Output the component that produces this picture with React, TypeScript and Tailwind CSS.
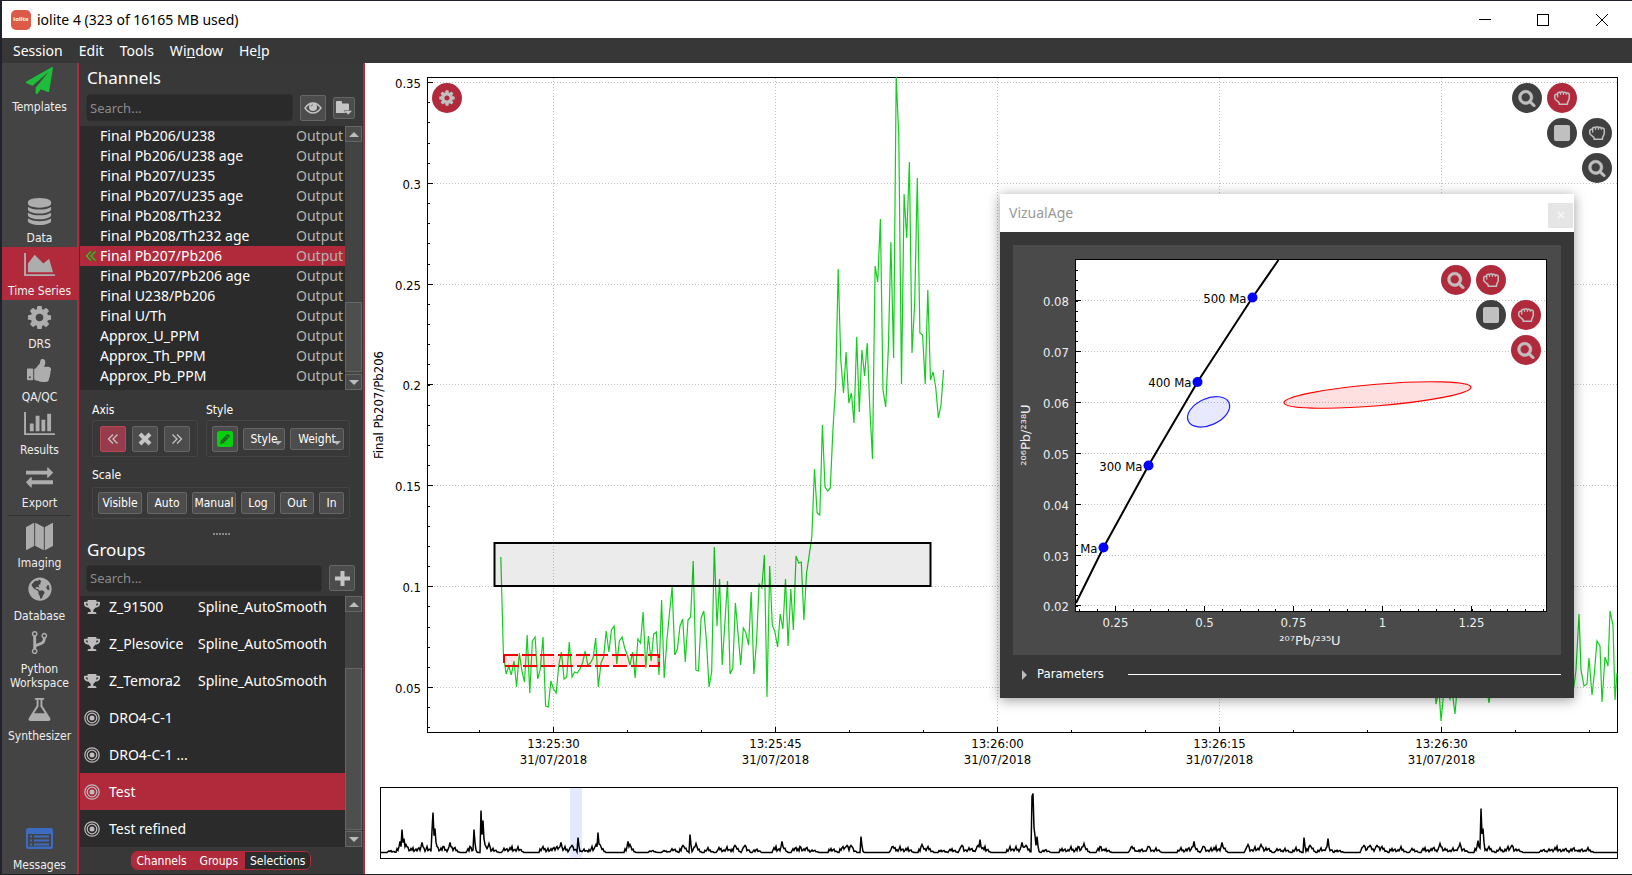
import React, { useState } from 'react';
import { FaGlobeAmericas, FaRegHandRock, FaTrophy } from 'react-icons/fa';

const COG =
  'M1152 896q0-106-75-181t-181-75-181 75-75 181 75 181 181 75 181-75 75-181zm512-109v222q0 12-8 23t-20 13l-185 28q-19 54-39 91 35 50 107 138 10 12 10 25t-9 23q-27 37-99 108t-94 71q-12 0-26-9l-138-108q-44 23-91 38-16 136-29 186-7 28-36 28h-222q-14 0-24.5-8.500t-11.500-21.500l-28-184q-49-16-90-37l-141 107q-10 9-25 9-14 0-25-11-126-114-165-168-7-10-7-23 0-12 8-23 15-21 51-66.500t54-70.500q-27-50-41-99l-183-27q-13-2-21-12.500t-8-23.500v-222q0-12 8-23t19-13l186-28q14-46 39-92-40-57-107-138-10-12-10-24 0-10 9-23 26-36 98.500-107.500t94.500-71.500q13 0 26 10l138 107q44-23 91-38 16-136 29-186 7-28 36-28h222q14 0 24.500 8.500t11.500 21.500l28 184q49 16 90 37l142-107q9-9 24-9 13 0 25 10 129 119 165 170 7 8 7 22 0 12-8 23-15 21-51 66.500t-54 70.500q26 50 41 98l183 28q13 2 21 12.500t8 23.500z';
const SEARCH =
  'M1216 832q0-185-131.500-316.500t-316.500-131.500-316.500 131.500-131.500 316.500 131.500 316.500 316.500 131.500 316.500-131.500 131.500-316.500zm512 832q0 52-38 90t-90 38q-54 0-90-38l-343-342q-179 124-399 124-143 0-273.500-55.500t-225-150-150-225-55.500-273.500 55.500-273.500 150-225 225-150 273.500-55.500 273.500 55.500 225 150 150 225 55.500 273.500q0 220-124 399l343 343q37 37 37 90z';
const PLANE =
  'M1764 11q33 24 27 64l-256 1536q-5 29-32 45-14 8-31 8-11 0-24-5l-453-185-242 295q-18 23-49 23-13 0-22-4-19-7-30.500-23.500t-11.500-36.500v-349l864-1059-1069 925-395-162q-37-14-40-55-2-40 32-59l1664-960q15-9 32-9 20 0 36 11z';
const DATABASE =
  'M896 768q237 0 443-43t325-127v170q0 69-103 128t-280 93.500-385 34.500-385-34.500-280-93.500-103-128v-170q119 84 325 127t443 43zm0 768q237 0 443-43t325-127v170q0 69-103 128t-280 93.500-385 34.500-385-34.500-280-93.500-103-128v-170q119 84 325 127t443 43zm0-384q237 0 443-43t325-127v170q0 69-103 128t-280 93.500-385 34.500-385-34.500-280-93.500-103-128v-170q119 84 325 127t443 43zm0-1152q208 0 385 34.500t280 93.500 103 128v128q0 69-103 128t-280 93.500-385 34.500-385-34.500-280-93.500-103-128v-128q0-69 103-128t280-93.500 385-34.500z';
const AREA =
  'M2048 1536v128h-2048v-1536h128v1408h1920zm-384-1024l256 896h-1664v-576l448-576 576 576z';
const BARS =
  'M640 896v512h-256v-512h256zm384-512v1024h-256v-1024h256zm1024 1152v128h-2048v-1536h128v1408h1920zm-640-896v768h-256v-768h256zm384-384v1152h-256v-1152h256z';
const THUMB =
  'M320 1344q0-26-19-45t-45-19q-27 0-45.500 19t-18.500 45q0 27 18.500 45.500t45.500 18.500q26 0 45-18.500t19-45.500zm160-512v640q0 26-19 45t-45 19h-288q-26 0-45-19t-19-45v-640q0-26 19-45t45-19h288q26 0 45 19t19 45zm1184 0q0 86-55 149 15 44 15 76 3 76-43 137 17 56 0 117-15 57-54 94 9 112-49 181-64 76-197 78h-129q-66 0-144-15.500t-121.500-29-120.500-39.500q-123-43-158-44-26-1-45-19.500t-19-44.500v-641q0-25 18-43.500t43-20.500q24-2 76-59t101-121q68-87 101-120 18-18 31-48t17.500-48.500 13.500-60.500q7-39 12.500-61t19.500-52 34-50q19-19 45-19 46 0 82.500 10.500t60 26 40 40.500 24 45 12 50 5 45 .5 39q0 38-9.500 76t-19 60-27.500 56q-3 6-10 18t-11 22-8 24h277q78 0 135 57t57 135z';
const EXCHANGE =
  'M1792 1184v192q0 13-9.500 22.500t-22.500 9.500h-1376v192q0 13-9.500 22.500t-22.500 9.500q-12 0-24-10l-319-320q-9-9-9-22 0-14 9-23l320-320q9-9 23-9 13 0 22.500 9.500t9.500 22.500v192h1376q13 0 22.500 9.500t9.500 22.500zm0-544q0 14-9 23l-320 320q-9 9-23 9-13 0-22.500-9.500t-9.500-22.500v-192h-1376q-13 0-22.500-9.500t-9.500-22.500v-192q0-13 9.500-22.500t22.500-9.500h1376v-192q0-14 9-23t23-9q12 0 24 10l319 319q9 9 9 23z';
const MAP =
  'M512 0q13 0 22.500 9.500t9.500 22.500v1472q0 20-17 28l-480 256q-7 4-15 4-13 0-22.500-9.500t-9.500-22.500v-1472q0-20 17-28l480-256q7-4 15-4zm1248 0q13 0 22.500 9.500t9.500 22.500v1472q0 20-17 28l-480 256q-7 4-15 4-13 0-22.500-9.500t-9.500-22.500v-1472q0-20 17-28l480-256q7-4 15-4zm-1120 0q8 0 14 3l512 256q18 10 18 29v1472q0 13-9.500 22.500t-22.500 9.500q-8 0-14-3l-512-256q-18-10-18-29v-1472q0-13 9.500-22.500t22.500-9.500z';
const FORK =
  'M672 1472q0-40-28-68t-68-28-68 28-28 68 28 68 68 28 68-28 28-68zm0-1152q0-40-28-68t-68-28-68 28-28 68 28 68 68 28 68-28 28-68zm640 128q0-40-28-68t-68-28-68 28-28 68 28 68 68 28 68-28 28-68zm96 0q0 52-26 96.500t-70 69.500q-2 287-226 414-68 38-203 81-128 40-169.500 71t-41.500 100v26q44 25 70 69.500t26 96.500q0 80-56 136t-136 56-136-56-56-136q0-52 26-96.500t70-69.500v-820q-44-25-70-69.500t-26-96.500q0-80 56-136t136-56 136 56 56 136q0 52-26 96.500t-70 69.500v497q54-26 154-57 55-17 87.500-29.500t70.500-31 59-39.500 40.500-51 28-69.500 8.500-91.500q-44-25-70-69.500t-26-96.500q0-80 56-136t136-56 136 56 56 136z';
const FLASK =
  'M1591 1448q56 89 21.500 152.500t-140.500 63.500h-1152q-106 0-140.500-63.500t21.500-152.500l503-793v-399h-64q-26 0-45-19t-19-45 19-45 45-19h512q26 0 45 19t19 45-19 45-45 19h-64v399zm-779-725l-272 429h712l-272-429-20-31v-436h-128v436z';

const Glyph = ({ d, className, wide }: { d: string; className: string; wide?: boolean }) => (
  <svg viewBox={wide ? '0 0 2048 1792' : '0 0 1792 1792'} className={className} fill="currentColor" aria-hidden="true">
    <path d={d} />
  </svg>
);

const SearchIcon = () => (
  <svg viewBox="0 0 1792 1792" className="h-[18px] w-[18px]" fill="currentColor" stroke="currentColor" strokeWidth="60" aria-hidden="true">
    <path d={SEARCH} />
  </svg>
);

const ListIcon = () => (
  <svg viewBox="0 0 27 21" className="h-[21px] w-[27px]" fill="#3b6cc0" aria-hidden="true">
    <path fillRule="evenodd" d="M2 0h23a2 2 0 0 1 2 2v17a2 2 0 0 1-2 2H2a2 2 0 0 1-2-2V2a2 2 0 0 1 2-2zM2 6v12.500h23V6z" />
    <path d="M4 7.500h2v2H4zM4 11.500h2v2H4zM4 15.500h2v2H4zM8 7.500h15v2H8zM8 11.500h15v2H8zM8 15.500h15v2H8z" />
  </svg>
);

const Bullseye = () => (
  <svg viewBox="0 0 16 16" className="h-4 w-4" fill="none" stroke="#bdbdbd" strokeWidth="1.200" aria-hidden="true">
    <circle cx="8" cy="8" r="7.200" />
    <circle cx="8" cy="8" r="4.800" />
    <circle cx="8" cy="8" r="2.500" fill="#bdbdbd" stroke="none" />
  </svg>
);

const Chevrons = ({ flip, color, className }: { flip?: boolean; color: string; className: string }) => (
  <svg viewBox="0 0 12 12" className={className} fill="none" stroke={color} strokeWidth="1.300" aria-hidden="true">
    <path d={flip ? 'M1.500 1.500L6 6 1.500 10.500M6 1.500L10.500 6 6 10.500' : 'M6 1.500L1.500 6 6 10.500M10.500 1.500L6 6l4.500 4.500'} />
  </svg>
);

interface NavEntry {
  label: string;
  icon: React.ReactNode;
}

const NAV_MAIN: NavEntry[] = [
  { label: 'Data', icon: <Glyph d={DATABASE} className="h-[27px] w-[27px]" /> },
  { label: 'Time Series', icon: <Glyph d={AREA} wide className="h-[27px] w-[31px]" /> },
  { label: 'DRS', icon: <Glyph d={COG} className="h-[27px] w-[27px]" /> },
  { label: 'QA/QC', icon: <Glyph d={THUMB} className="h-[27px] w-[27px]" /> },
  { label: 'Results', icon: <Glyph d={BARS} wide className="h-[27px] w-[31px]" /> },
  { label: 'Export', icon: <Glyph d={EXCHANGE} className="h-[27px] w-[27px]" /> },
];

const NAV_EXTRA: NavEntry[] = [
  { label: 'Imaging', icon: <Glyph d={MAP} className="h-[27px] w-[27px]" /> },
  { label: 'Database', icon: <FaGlobeAmericas size={24} /> },
  { label: 'Python Workspace', icon: <Glyph d={FORK} className="h-[27px] w-[27px]" /> },
  { label: 'Synthesizer', icon: <Glyph d={FLASK} className="h-[27px] w-[27px]" /> },
];

const CHANNELS = [
  'Final Pb206/U238',
  'Final Pb206/U238 age',
  'Final Pb207/U235',
  'Final Pb207/U235 age',
  'Final Pb208/Th232',
  'Final Pb208/Th232 age',
  'Final Pb207/Pb206',
  'Final Pb207/Pb206 age',
  'Final U238/Pb206',
  'Final U/Th',
  'Approx_U_PPM',
  'Approx_Th_PPM',
  'Approx_Pb_PPM',
];

const GROUPS = [
  { name: 'Z_91500', spline: 'Spline_AutoSmooth' },
  { name: 'Z_Plesovice', spline: 'Spline_AutoSmooth' },
  { name: 'Z_Temora2', spline: 'Spline_AutoSmooth' },
  { name: 'DRO4-C-1', spline: '' },
  { name: 'DRO4-C-1 ...', spline: '' },
  { name: 'Test', spline: '' },
  { name: 'Test refined', spline: '' },
];

const TRACE = [
  557, 654, 674, 666, 675, 661, 687, 653, 671, 682, 635, 693, 641, 637, 679, 669, 637, 706, 707, 681, 689, 693, 665,
  652, 679, 677, 642, 677, 672, 673, 669, 663, 651, 665, 663, 658, 638, 687, 663, 657, 631, 652, 630, 626, 664, 641,
  637, 648, 655, 665, 652, 678, 639, 643, 612, 668, 636, 661, 634, 632, 675, 600, 678, 640, 613, 587, 655, 649, 626,
  619, 662, 620, 617, 561, 670, 671, 618, 611, 640, 687, 672, 547, 626, 579, 665, 623, 581, 674, 668, 603, 633, 665,
  628, 633, 645, 592, 674, 642, 584, 588, 555, 697, 566, 625, 632, 647, 614, 629, 579, 646, 589, 630, 556, 563, 562,
  620, 573, 555, 537, 469, 513, 515, 425, 487, 491, 488, 430, 387, 269, 360, 393, 352, 403, 393, 423, 337, 412, 350,
  376, 343, 407, 459, 266, 282, 219, 390, 407, 350, 242, 358, 77, 137, 384, 194, 238, 162, 353, 303, 178, 333, 335,
  384, 290, 380, 372, 387, 418, 405, 370,
];
const TRACE_POINTS = TRACE.map((y, i) => `${(500.8 + i * 2.636).toFixed(1)},${y}`).join(' ');

const TRACE_TAIL =
  '1435,690 1436,704 1439,690 1441,721 1444,690 1447,690 1450,699 1452,690 1455,714 1457,690 1487,690 1489,703 1491,690 1560,690 1574,686 1576,670 1579,614 1581,670 1584,686 1587,684 1589,658 1592,695 1594,677 1597,641 1600,646 1602,702 1605,657 1608,666 1610,611 1613,625 1615,700 1617,673';

// x and height of every peak in the session overview
const PEAKS: [number, number][] = [
  [391, 2], [400, 11], [402, 23], [404, 14], [406, 8], [413, 5], [418, 5], [422, 10], [427, 6], [432, 22], [433, 40],
  [435, 24], [437, 6], [443, 6], [450, 10], [454, 5], [470, 6], [474, 23], [481, 42], [483, 32], [485, 8], [489, 9],
  [493, 4], [505, 5], [512, 6], [518, 5], [543, 6], [548, 4], [553, 5], [557, 6], [561, 10], [565, 5], [572, 7],
  [578, 15], [584, 3], [592, 6], [596, 8], [598, 20], [600, 8], [628, 11], [630, 8], [652, 2], [665, 2], [673, 4],
  [683, 7], [690, 18], [696, 9], [708, 4], [720, 5], [727, 5], [735, 7], [745, 7], [756, 4], [776, 6], [782, 11],
  [795, 5], [800, 6], [806, 5], [813, 3], [832, 5], [843, 6], [847, 7], [851, 7], [861, 16], [893, 6], [900, 6],
  [908, 5], [922, 8], [928, 6], [942, 3], [952, 4], [962, 7], [970, 5], [978, 7], [980, 13], [985, 6], [1010, 6],
  [1016, 5], [1022, 10], [1026, 7], [1032, 56], [1033, 59], [1035, 17], [1037, 16], [1045, 3], [1063, 5], [1071, 5],
  [1078, 6], [1084, 9], [1100, 6], [1106, 4], [1132, 6], [1141, 4], [1149, 6], [1156, 4], [1181, 4], [1188, 5],
  [1194, 11], [1204, 6], [1211, 4], [1216, 6], [1222, 10], [1248, 8], [1255, 5], [1261, 8], [1267, 5], [1278, 4],
  [1285, 4], [1296, 5], [1304, 15], [1310, 7], [1321, 4], [1328, 14], [1338, 3], [1364, 7], [1370, 7], [1377, 7],
  [1382, 6], [1393, 5], [1401, 5], [1413, 4], [1425, 5], [1433, 5], [1440, 9], [1446, 4], [1453, 4], [1460, 9],
  [1463, 4], [1478, 12], [1481, 44], [1483, 24], [1489, 6], [1500, 4], [1508, 6], [1512, 7], [1517, 4], [1543, 3],
  [1550, 4], [1557, 6], [1565, 4], [1573, 5], [1581, 4], [1588, 4],
];

const overviewHeight = (x: number) =>
  PEAKS.reduce((top, [px, h]) => {
    const d = x - px;
    if (h > 14) {
      if (d < -1 || d > 3) return top;
      return Math.max(top, h * (d <= 0 ? 1 + d : (1 - d / 4) ** 3));
    }
    if (d < -3 || d > 5) return top;
    return Math.max(top, d === 0 ? h : Math.min(h, 7) * (1 - Math.abs(d) / 6));
  }, 0);

const OVERVIEW_POINTS = Array.from({ length: 1237 }, (_, i) => {
  const x = 381 + i;
  const h = overviewHeight(x);
  const jitter = h > 5 ? 1 : 0.3 + ((i * 37) % 11) / 11;
  return `${x},${(852.5 - h * jitter).toFixed(1)}`;
}).join(' ');

const Y_TICKS: [string, number][] = [
  ['0.35', 82.5], ['0.3', 183.5], ['0.25', 284.5], ['0.2', 384.5], ['0.15', 485.5], ['0.1', 586.5], ['0.05', 687.5],
];
const X_TICKS: [string, number][] = [
  ['13:25:30', 553.5], ['13:25:45', 775.5], ['13:26:00', 997.5], ['13:26:15', 1219.5], ['13:26:30', 1441.5],
];
const range = (from: number, to: number, step: number) => {
  const out: number[] = [];
  for (let v = from; v <= to; v += step) out.push(v);
  return out;
};

const TimeSeriesChart = () => (
  <svg viewBox="365 63 1267 712" className="w-full min-h-0 flex-1 font-['DejaVu_Sans_Condensed','DejaVu_Sans',sans-serif] text-[13px]" role="img" aria-label="Final Pb207/Pb206 time series">
    <g stroke="#c0c0c0" strokeDasharray="1 2" shapeRendering="crispEdges">
      {Y_TICKS.map(([t, y]) => <line key={t} x1="428" x2="1617" y1={y} y2={y} />)}
      {X_TICKS.map(([t, x]) => <line key={t} x1={x} x2={x} y1="78" y2="732" />)}
    </g>
    <g stroke="#000" shapeRendering="crispEdges">
      <rect x="427.5" y="77.5" width="1190" height="655" fill="none" />
      {Y_TICKS.map(([t, y]) => <line key={t} x1="428" x2="433" y1={y} y2={y} />)}
      {range(82.5, 732, 20.17).map((y) => <line key={y} x1="428" x2="430" y1={y} y2={y} />)}
      {X_TICKS.map(([t, x]) => <line key={t} x1={x} x2={x} y1="727" y2="732" />)}
      {range(479.5, 1617, 74).map((x) => <line key={x} x1={x} x2={x} y1="730" y2="732" />)}
    </g>
    <g fill="none" stroke="#12cf1c" strokeWidth="1.200">
      <polyline points={TRACE_POINTS} />
      <polyline points={TRACE_TAIL} />
    </g>
    <rect x="494.5" y="543" width="436" height="43" fill="#000" fillOpacity="0.08" stroke="#000" strokeWidth="2" />
    <rect x="504" y="655" width="155" height="11" fill="#f00" fillOpacity="0.1" stroke="#f00000" strokeWidth="2" strokeDasharray="14 4" />
    <g fill="#000">
      {Y_TICKS.map(([t, y]) => <text key={t} x="421" y={y + 5} textAnchor="end">{t}</text>)}
      {X_TICKS.map(([t, x]) => (
        <text key={t} textAnchor="middle">
          <tspan x={x} y="748">{t}</tspan>
          <tspan x={x} y="764">31/07/2018</tspan>
        </text>
      ))}
      <text transform="translate(383 405) rotate(-90)" textAnchor="middle">Final Pb207/Pb206</text>
    </g>
  </svg>
);

const Overview = () => (
  <svg viewBox="365 775 1267 99" className="w-full shrink-0" role="img" aria-label="Session overview">
    <rect x="570" y="788" width="12" height="70" fill="#e4e9ff" />
    <polyline points={OVERVIEW_POINTS} fill="none" stroke="#000" strokeWidth="1.500" />
    <rect x="380.5" y="787.5" width="1237" height="71" fill="none" stroke="#000" shapeRendering="crispEdges" />
  </svg>
);

const AGE_Y: [string, number][] = [
  ['0.08', 300.5], ['0.07', 351.5], ['0.06', 402.5], ['0.05', 453.5], ['0.04', 504.5], ['0.03', 555.5], ['0.02', 605.5],
];
const AGE_X: [string, number][] = [
  ['0.25', 1115.5], ['0.5', 1204.5], ['0.75', 1293.5], ['1', 1382.5], ['1.25', 1471.5],
];
const AGE_MARKS: [string, number, number][] = [
  ['500 Ma', 1252.5, 297.5], ['400 Ma', 1197.5, 382], ['300 Ma', 1148.5, 465.5], ['Ma', 1103.5, 547.5],
];

const ConcordiaChart = () => (
  <svg viewBox="1013 245 548 410" className="block w-full font-['DejaVu_Sans_Condensed','DejaVu_Sans',sans-serif] text-[13px]" role="img" aria-label="Concordia diagram">
    <rect x="1075.5" y="259.5" width="471" height="352" fill="#fff" />
    <g stroke="#c0c0c0" strokeDasharray="1 2" shapeRendering="crispEdges">
      {AGE_Y.map(([t, y]) => <line key={t} x1="1076" x2="1546" y1={y} y2={y} />)}
    </g>
    <g stroke="#000" shapeRendering="crispEdges">
      <rect x="1075.5" y="259.5" width="471" height="352" fill="none" />
      {AGE_Y.map(([t, y]) => <line key={t} x1="1076" x2="1081" y1={y} y2={y} />)}
      {range(270.5, 611, 10.17).map((y) => <line key={y} x1="1076" x2="1078" y1={y} y2={y} />)}
      {AGE_X.map(([t, x]) => <line key={t} x1={x} x2={x} y1="606" y2="611" />)}
      {range(1079.5, 1546, 17.85).map((x) => <line key={x} x1={x} x2={x} y1="609" y2="611" />)}
    </g>
    <polyline points="1076,603 1103.5,547.5 1148.5,465.5 1197.500,382 1252.5,297.5 1278.5,260" fill="none" stroke="#000" strokeWidth="2" />
    <ellipse cx="1208.600" cy="411.800" rx="22.300" ry="13.300" transform="rotate(-24.400 1208.600 411.800)" fill="#00f" fillOpacity="0.09" stroke="#2020ff" strokeWidth="1.200" />
    <ellipse cx="1377.500" cy="395" rx="93.800" ry="10.800" transform="rotate(-4.700 1377.500 395)" fill="#f00" fillOpacity="0.12" stroke="#f00" strokeWidth="1.200" />
    {AGE_MARKS.map(([t, x, y]) => (
      <g key={t}>
        <circle cx={x} cy={y} r="5" fill="#00f" />
        <text x={x - 6} y={y + 5} textAnchor="end">{t}</text>
      </g>
    ))}
    <g fill="#eee">
      {AGE_Y.map(([t, y]) => <text key={t} x="1069" y={y + 5} textAnchor="end">{t}</text>)}
      {AGE_X.map(([t, x]) => <text key={t} x={x} y="627" textAnchor="middle">{t}</text>)}
      <g className="font-['DejaVu_Sans',sans-serif]">
        <text x="1310" y="645" textAnchor="middle">²⁰⁷Pb/²³⁵U</text>
        <text transform="translate(1030 435) rotate(-90)" textAnchor="middle">²⁰⁶Pb/²³⁸U</text>
      </g>
    </g>
  </svg>
);

const Round = ({ label, red, className, children }: { label: string; red?: boolean; className?: string; children: React.ReactNode }) => (
  <button
    type="button"
    aria-label={label}
    className={`flex h-[30px] w-[30px] items-center justify-center rounded-full text-[#c0c0c0] ${red ? 'bg-[#b02a3b]' : 'bg-[#404040]'} ${className ?? ''}`}
  >
    {children}
  </button>
);

// Zoom and pan buttons in the corner of a plot, one row per axis
const PlotTools = ({ red }: { red?: boolean }) => (
  <div className="grid grid-cols-3 gap-[5px]">
    <Round label="Zoom both axes" red={red}><SearchIcon /></Round>
    <Round label="Pan both axes" red><FaRegHandRock size={16} /></Round>
    <Round label="Select area" className="col-start-2"><span className="h-4 w-4 rounded-xs bg-[#c0c0c0]" /></Round>
    <Round label="Pan x axis" red={red}><FaRegHandRock size={16} /></Round>
    <Round label="Zoom x axis" red={red} className="col-start-3"><SearchIcon /></Round>
  </div>
);

const NavButton = ({ entry, active, onClick }: { entry: NavEntry; active?: boolean; onClick: () => void }) => (
  <button
    type="button"
    onClick={onClick}
    className={`flex w-full flex-col items-center gap-1.5 pt-[3px] pb-0.5 text-xs leading-[14px] text-[#eee] ${active ? 'bg-[#b02a3b]' : ''}`}
  >
    <span className="flex h-7 items-center justify-center text-[#adadad]">{entry.icon}</span>
    <span className="w-full px-0.5">{entry.label}</span>
  </button>
);

const SmallButton = ({ label, width, menu }: { label: string; width: string; menu?: boolean }) => (
  <button
    type="button"
    className={`relative flex h-[22px] items-center justify-center rounded-xs border border-[#666] bg-[#4c4c4c] text-xs text-white ${width}`}
  >
    {label}
    {menu && <span className="absolute right-0.5 bottom-1 h-0 w-0 border-x-4 border-t-4 border-x-transparent border-t-[#bbb]" />}
  </button>
);

const SquareButton = ({ label, red, children }: { label: string; red?: boolean; children: React.ReactNode }) => (
  <button
    type="button"
    aria-label={label}
    className={`flex h-[26px] w-[26px] shrink-0 items-center justify-center rounded-xs border text-[#c4c4c4] ${red ? 'border-[#bb4455] bg-[#973c4a]' : 'border-[#666] bg-[#4c4c4c]'}`}
  >
    {children}
  </button>
);

const ScrollBar = ({ above, thumb }: { above: string; thumb: string }) => (
  <div className="flex w-[17px] shrink-0 flex-col bg-[#434343]" aria-hidden="true">
    <div className="flex h-4 items-center justify-center border border-[#666] bg-[#4a4a4a]">
      <span className="border-x-5 border-b-5 border-x-transparent border-b-[#bbb]" />
    </div>
    <div className={above} />
    <div className={`${thumb} border border-[#666] bg-[#4e4e4e]`} />
    <div className="mt-auto flex h-4 items-center justify-center border border-[#666] bg-[#4a4a4a]">
      <span className="border-x-5 border-t-5 border-x-transparent border-t-[#bbb]" />
    </div>
  </div>
);

const SearchBox = ({ label }: { label: string }) => (
  <input
    type="text"
    aria-label={label}
    placeholder="Search..."
    className="h-[27px] min-w-0 flex-1 rounded-sm border border-[#303030] bg-[#2a2a2a] px-[3px] text-[13px] text-white outline-none placeholder:text-[#8c8c8c]"
  />
);

export default function App() {
  const [page, setPage] = useState('Time Series');
  const [channel, setChannel] = useState('Final Pb207/Pb206');
  const [group, setGroup] = useState('Test');

  return (
    <div className="flex h-screen min-h-[875px] flex-col bg-[#20222b] pt-px pb-px pl-0.5 font-['Noto_Sans',sans-serif] text-sm">
      <header className="flex h-[37px] shrink-0 items-center bg-white pl-[9px] text-black">
        <span className="mr-1.5 flex h-5 w-5 items-center justify-center rounded-[5px] bg-[#dd5a48] text-[6px] font-bold text-white">iolite</span>
        <h1>iolite 4 (323 of 16165 MB used)</h1>
        <div className="ml-auto flex">
          <button type="button" aria-label="Minimize" className="flex h-9 w-[58px] items-center justify-center">
            <svg viewBox="0 0 12 12" className="h-3 w-3" stroke="#000" shapeRendering="crispEdges"><path d="M0 5.500h12" /></svg>
          </button>
          <button type="button" aria-label="Maximize" className="flex h-9 w-[58px] items-center justify-center">
            <svg viewBox="0 0 12 12" className="h-3 w-3" fill="none" stroke="#000" shapeRendering="crispEdges"><path d="M.5.500h11v11H.5z" /></svg>
          </button>
          <button type="button" aria-label="Close" className="flex h-9 w-[60px] items-center justify-center">
            <svg viewBox="0 0 12 12" className="h-3 w-3" stroke="#000"><path d="M0 0l12 12M12 0L0 12" /></svg>
          </button>
        </div>
      </header>

      <nav className="flex h-[25px] shrink-0 items-center gap-4 bg-[#373737] pl-[11px] text-white">
        <button type="button">Session</button>
        <button type="button">Edit</button>
        <button type="button">Tools</button>
        <button type="button">Wi<u>n</u>dow</button>
        <button type="button">He<u>l</u>p</button>
      </nav>

      <div className="flex min-h-0 flex-1">
        <nav className="flex w-[75px] shrink-0 flex-col bg-[#444] font-['DejaVu_Sans_Condensed','DejaVu_Sans',sans-serif]">
          <NavButton entry={{ label: 'Templates', icon: <Glyph d={PLANE} className="h-[27px] w-[27px] text-[#1fbe3a]" /> }} onClick={() => setPage('Templates')} />
          <div className="h-[78px]" />
          {NAV_MAIN.map((entry) => (
            <NavButton key={entry.label} entry={entry} active={page === entry.label} onClick={() => setPage(entry.label)} />
          ))}
          <div className="mx-1.5 my-[3px] h-px bg-[#333]" />
          {NAV_EXTRA.map((entry) => (
            <NavButton key={entry.label} entry={entry} active={page === entry.label} onClick={() => setPage(entry.label)} />
          ))}
          <div className="mt-auto">
            <NavButton entry={{ label: 'Messages', icon: <ListIcon /> }} onClick={() => setPage('Messages')} />
          </div>
        </nav>

        <aside className="flex w-[288px] shrink-0 flex-col border-x-2 border-[#b02a3b] bg-[#383838] px-px text-white">
          <h2 className="px-[7px] pt-0.5 text-[17px] leading-[26px]">Channels</h2>
          <div className="flex h-[33px] items-center gap-[7px] pr-[7px] pl-1.5">
            <SearchBox label="Search channels" />
            <SquareButton label="Show visible channels">
              <svg viewBox="0 0 18 12" className="h-3 w-[18px]" aria-hidden="true">
                <path d="M1 6q3.500-5 8-5t8 5q-3.500 5-8 5T1 6z" fill="none" stroke="#c4c4c4" strokeWidth="1.400" />
                <circle cx="9" cy="5" r="4" fill="#c4c4c4" />
                <path d="M7 4.500q.3-1.500 2-1.700" fill="none" stroke="#555" strokeWidth=".8" />
              </svg>
            </SquareButton>
            <button type="button" aria-label="Channel folder" className="flex h-[22px] w-[22px] items-center justify-center rounded-xs border border-[#666] bg-[#4c4c4c]">
              <svg viewBox="0 0 18 16" className="h-4 w-[18px]" fill="#c4c4c4" aria-hidden="true">
                <path d="M1 2q0-1 1-1h4q1 0 1 1v1.500h6q1 0 1 1V13H1z" />
                <path d="M9 10.500h8.500L13.200 15z" stroke="#4c4c4c" strokeWidth=".5" />
              </svg>
            </button>
          </div>

          <div className="mt-0.5 flex h-[264px] shrink-0 bg-[#2b2b2b]">
            <div className="flex-1 overflow-hidden">
              <table className="w-full border-collapse">
                <tbody>
                  {CHANNELS.map((name) => (
                    <tr key={name} onClick={() => setChannel(name)} className={`h-5 leading-5 ${channel === name ? 'bg-[#b02a3b]' : ''}`}>
                      <td className="w-5 p-0 pl-[5px]">
                        {channel === name && <Chevrons color="#12d41c" className="h-3 w-3" />}
                      </td>
                      <td className="p-0">{name}</td>
                      <td className="p-0 pr-0.5 text-right text-[#b4b4b4]">Output</td>
                    </tr>
                  ))}
                </tbody>
              </table>
            </div>
            <ScrollBar above="h-40" thumb="h-[70px]" />
          </div>

          <section className="flex shrink-0 flex-col px-3 pt-2.5 font-['DejaVu_Sans_Condensed','DejaVu_Sans',sans-serif] text-xs">
            <div className="flex gap-2">
              <div>
                <h3 className="leading-5">Axis</h3>
                <div className="flex h-[37px] w-[106px] items-center justify-center gap-1.5 rounded-xs border border-[#444]">
                  <SquareButton label="Left axis" red><Chevrons color="#c4c4c4" className="h-3 w-3" /></SquareButton>
                  <SquareButton label="No axis">
                    <svg viewBox="0 0 14 14" className="h-3.5 w-3.5" stroke="#c4c4c4" strokeWidth="4" aria-hidden="true">
                      <path d="M2 2l10 10M12 2L2 12" />
                    </svg>
                  </SquareButton>
                  <SquareButton label="Right axis"><Chevrons flip color="#c4c4c4" className="h-3 w-3" /></SquareButton>
                </div>
              </div>
              <div className="flex-1">
                <h3 className="leading-5">Style</h3>
                <div className="flex h-[37px] items-center gap-[5px] rounded-xs border border-[#444] pl-[5px]">
                  <SquareButton label="Line colour">
                    <svg viewBox="0 0 16 16" className="h-4 w-4" aria-hidden="true">
                      <rect width="16" height="16" rx="2.500" fill="#08d010" />
                      <path d="M3 13l.8-3.500L10 3.300q.7-.6 1.400 0l1.300 1.300q.7.700 0 1.400L6.500 12.200z" fill="#1f6b22" />
                      <path d="M9 4.500l2.500 2.500" stroke="#08d010" strokeWidth=".8" />
                    </svg>
                  </SquareButton>
                  <SmallButton label="Style" width="w-[42px]" menu />
                  <SmallButton label="Weight" width="w-[54px]" menu />
                </div>
              </div>
            </div>
            <h3 className="mt-1.5 leading-6">Scale</h3>
            <div className="flex h-8 items-center gap-[5px] rounded-xs border border-[#444] pl-[5px]">
              <SmallButton label="Visible" width="w-11" />
              <SmallButton label="Auto" width="w-10" />
              <SmallButton label="Manual" width="w-11" />
              <SmallButton label="Log" width="w-[34px]" />
              <SmallButton label="Out" width="w-[34px]" />
              <SmallButton label="In" width="w-[25px]" />
            </div>
          </section>

          <div className="flex h-[21px] shrink-0 items-end justify-center gap-px pb-[5px]">
            {range(1, 6, 1).map((n) => <span key={n} className="h-0.5 w-0.5 bg-[#888]" />)}
          </div>

          <h2 className="px-[7px] text-[17px] leading-5">Groups</h2>
          <div className="flex h-9 items-center gap-[7px] pr-[7px] pl-1.5">
            <SearchBox label="Search groups" />
            <SquareButton label="Add group">
              <svg viewBox="0 0 15 15" className="h-[15px] w-[15px]" fill="#c4c4c4" aria-hidden="true">
                <path d="M5.500 0h4v5.500H15v4H9.500V15h-4V9.500H0v-4h5.500z" />
              </svg>
            </SquareButton>
          </div>
          <div className="flex min-h-0 flex-1 bg-[#2b2b2b]">
            <div className="flex-1 overflow-hidden">
              <table className="-mt-2 w-full border-collapse">
                <tbody>
                  {GROUPS.map(({ name, spline }) => (
                    <tr key={name} onClick={() => setGroup(name)} className={`h-[37px] ${group === name ? 'bg-[#b02a3b]' : ''}`}>
                      <td className="w-[29px] p-0 pl-1">
                        {spline ? <FaTrophy size={16} className="text-[#bdbdbd]" /> : <Bullseye />}
                      </td>
                      <td className="w-[89px] p-0 whitespace-nowrap">{name}</td>
                      <td className="p-0">{spline}</td>
                    </tr>
                  ))}
                </tbody>
              </table>
            </div>
            <ScrollBar above="h-14" thumb="h-[162px]" />
          </div>
          <div className="flex h-[27px] shrink-0 items-center justify-center font-['DejaVu_Sans_Condensed','DejaVu_Sans',sans-serif] text-xs">
            <div className="flex h-[19px] overflow-hidden rounded-md border border-[#b02a3b]">
              <button type="button" aria-pressed="true" className="bg-[#b02a3b] pr-1.5 pl-[5px]">Channels</button>
              <button type="button" aria-pressed="true" className="bg-[#b02a3b] px-[7px]">Groups</button>
              <button type="button" aria-pressed="false" className="bg-[#2b2b2b] px-[5px]">Selections</button>
            </div>
          </div>
        </aside>

        <main className="relative flex min-w-0 flex-1 flex-col bg-white">
          <TimeSeriesChart />
          <Overview />
          <div className="absolute top-5 left-[67px]">
            <Round label="Plot settings" red><Glyph d={COG} className="h-[18px] w-[18px]" /></Round>
          </div>
          <div className="absolute top-5 right-5"><PlotTools /></div>

          <section className="absolute top-[131px] right-[58px] w-[574px] bg-[#373737] shadow-[0_2px_12px_rgba(0,0,0,0.4)]">
            <header className="flex h-[38px] items-center justify-between bg-white pr-px pl-[9px] text-[#999]">
              <h2>VizualAge</h2>
              <button type="button" aria-label="Close VizualAge" className="mt-1 flex h-[25px] w-[25px] items-center justify-center bg-[#e5e5e5]">
                <svg viewBox="0 0 8 8" className="h-2 w-2" stroke="#f6f6f6" strokeWidth="1.500"><path d="M1 1l6 6M7 1L1 7" /></svg>
              </button>
            </header>
            <div className="px-[13px] pt-[13px]">
              <div className="relative bg-[#4a4a4a]">
                <ConcordiaChart />
                <div className="absolute top-5 right-5"><PlotTools red /></div>
              </div>
              <button type="button" className="flex h-[43px] w-full items-center pb-1 pl-[9px] font-['DejaVu_Sans_Condensed','DejaVu_Sans',sans-serif] text-[13px] text-white">
                <span className="border-y-5 border-l-5 border-y-transparent border-l-[#bbb]" />
                <span className="ml-2.5">Parameters</span>
                <span className="ml-6 h-px flex-1 bg-white" />
              </button>
            </div>
          </section>
        </main>
      </div>
    </div>
  );
}
